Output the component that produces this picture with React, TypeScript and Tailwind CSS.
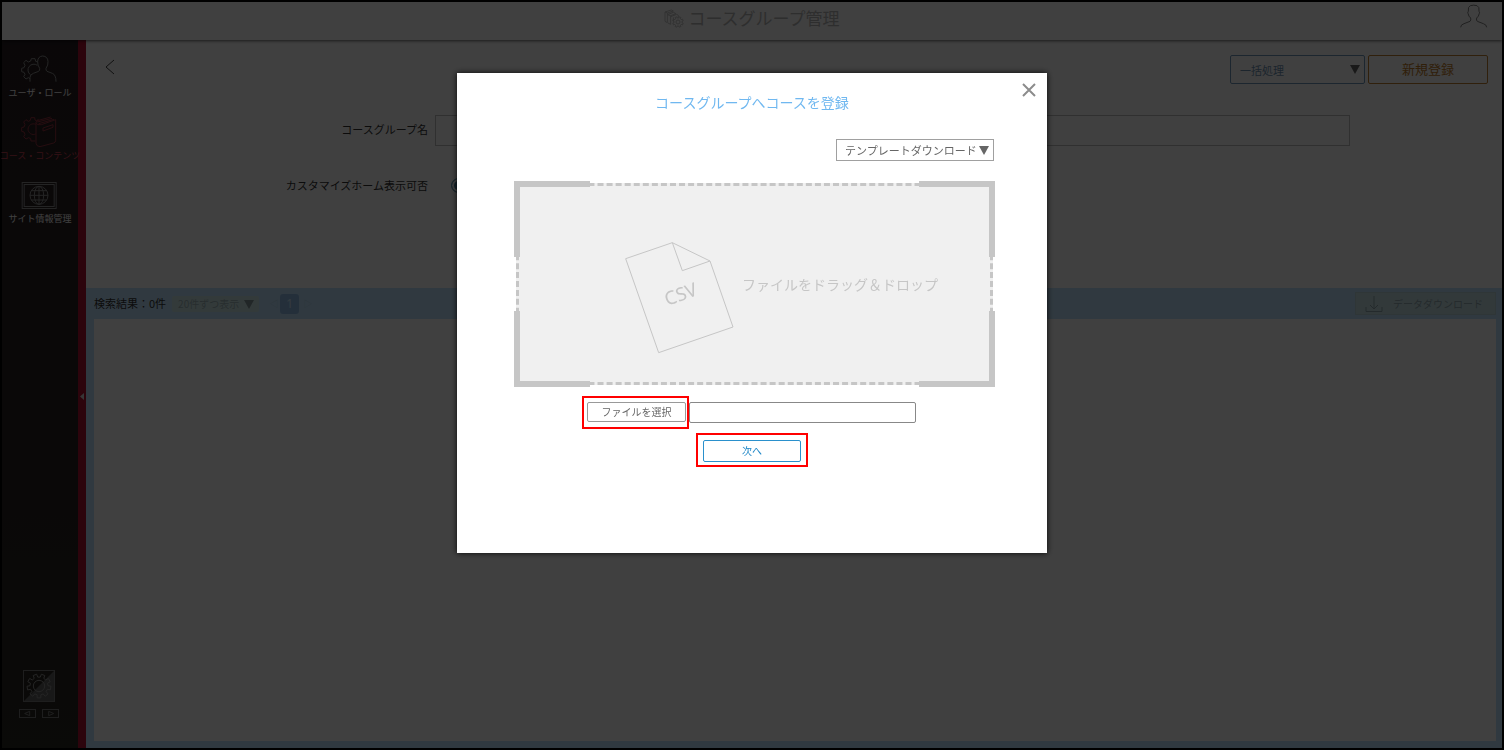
import React from "react";

function gearPath(cx: number, cy: number, outer: number, inner: number, teeth: number) {
  const step = (Math.PI * 2) / teeth;
  const at = (r: number, a: number) =>
    `${(cx + r * Math.cos(a)).toFixed(1)} ${(cy + r * Math.sin(a)).toFixed(1)}`;
  let d = "";
  for (let i = 0; i < teeth; i++) {
    const a = i * step - Math.PI / 2 + step / 2;
    d += `${i === 0 ? "M" : "L"}${at(inner, a - step * 0.3)} L${at(outer, a - step * 0.22)} L${at(outer, a + step * 0.22)} L${at(inner, a + step * 0.3)} `;
  }
  return d + "Z";
}

function UserRoleIcon() {
  return (
    <svg className="h-9 w-10" viewBox="62 153 120 108" fill="none" stroke="currentColor" strokeWidth="3">
      <path d="M116 186 L109 184 L107 176 L96 176 L94 183 L87 186 L80 181 L73 188 L77 196 L74 203 L67 205 L67 215 L74 217 L77 223 L73 230 L80 237 L87 233 L92 236" />
      <path d="M114 196 A17 17 0 1 0 93 224" />
      <path d="M92 245 V232 Q92 224 102 220 L118 214 Q122 211 121 205 Q114 196 115 184 Q116 169 130 168 Q145 169 146 184 Q147 196 140 205 Q139 211 143 214 L159 220 Q170 224 170 245" />
    </svg>
  );
}

function CourseIcon() {
  return (
    <svg className="h-9 w-10" viewBox="62 342 120 108" fill="none" stroke="currentColor" strokeWidth="3">
      <path d="M118 358 L111 362 L107 360 L106 353 L95 353 L93 361 L87 364 L80 359 L73 366 L77 374 L74 381 L67 383 L67 394 L74 396 L77 403 L73 410 L80 417 L88 413 L94 416 L95 423 L108 423" />
      <path d="M109 373 A16 16 0 1 0 109 402" />
      <path d="M110 368 Q110 363 118 361 L154 351 M114 366 L158 355 M118 371 L164 358" />
      <path d="M110 368 V430 Q112 440 122 440 L163 429 Q169 427 169 421 V359 L126 374 Q112 377 110 368" />
      <path d="M131 384 L161 374 V382 L131 393 Z" />
    </svg>
  );
}

function SiteIcon() {
  return (
    <svg className="h-9 w-10" viewBox="61 531 120 108" fill="none" stroke="currentColor" strokeWidth="3">
      <rect x="67.5" y="547.5" width="102" height="78" />
      <rect x="73.5" y="553.5" width="90" height="66" />
      <circle cx="118" cy="586" r="27" />
      <ellipse cx="118" cy="586" rx="14" ry="27" />
      <path d="M118 559 V613 M91 586 H145 M95 572 H141 M95 600 H141" />
    </svg>
  );
}

function SideItem({ label, icon, active }: { label: string; icon: React.ReactNode; active?: boolean }) {
  return (
    <a href="#" className={`flex flex-col items-center ${active ? "text-[#983440]" : "text-[#909090]"}`}>
      {icon}
      <span className={`text-[9px] leading-3 whitespace-nowrap ${active ? "text-[#d04458]" : "text-white"}`}>
        {label}
      </span>
    </a>
  );
}

function Sidebar() {
  return (
    <aside className="flex shrink-0">
      <nav className="relative flex w-19 flex-col gap-[15px] bg-[linear-gradient(#281f22,#282222_60%,#2a2820)] pt-[11px] pb-[30px]">
        <SideItem label="ユーザ・ロール" icon={<UserRoleIcon />} />
        <SideItem label="コース・コンテンツ" icon={<CourseIcon />} active />
        <SideItem label="サイト情報管理" icon={<SiteIcon />} />
        <div className="mt-auto flex flex-col items-center gap-[7px] pr-[2px] text-[#787878]">
          <button type="button" aria-label="設定">
            <svg className="block size-8" viewBox="0 0 96 96" fill="none" stroke="currentColor" strokeWidth="3">
              <path d="M96 0 V96 H0 Z" fill="#606060" stroke="none" />
              <rect x="1.5" y="1.5" width="93" height="93" />
              <path d={gearPath(48, 48, 36, 27, 9)} stroke="#909090" />
              <circle cx="48" cy="48" r="17" stroke="#909090" />
            </svg>
          </button>
          <div className="flex gap-[6px]">
            <button type="button" aria-label="前へ">
              <svg className="block h-[9px] w-[17px]" viewBox="0 0 51 27" fill="none" stroke="currentColor" strokeWidth="3">
                <rect x="1.5" y="1.5" width="48" height="24" />
                <path d="M32 7 V20 L17 13.5 Z" />
              </svg>
            </button>
            <button type="button" aria-label="次へ">
              <svg className="block h-[9px] w-[17px]" viewBox="0 0 51 27" fill="none" stroke="currentColor" strokeWidth="3">
                <rect x="1.5" y="1.5" width="48" height="24" />
                <path d="M20 7 V20 L35 13.5 Z" />
              </svg>
            </button>
          </div>
        </div>
      </nav>
      <button type="button" aria-label="メニューを閉じる" className="flex w-2 items-center justify-center bg-[#b01030] pt-1">
        <svg className="h-[7px] w-1" viewBox="0 0 4 7" fill="#d8d8d8">
          <path d="M4 0 V7 L0 3.5 Z" />
        </svg>
      </button>
    </aside>
  );
}

function Header() {
  return (
    <header className="relative z-10 grid h-[38px] shrink-0 grid-cols-[1fr_auto_1fr] items-start bg-white px-[14px] shadow-[0_1px_3px_rgba(0,0,0,0.6)]">
      <h1 className="col-start-2 flex items-center gap-1 pt-1 text-[17px] leading-6 text-[#b8b8b8]">
        <svg className="size-5" viewBox="0 0 60 60" fill="none" stroke="#c4c4c4" strokeWidth="3">
          <path d="M3 12 L22 6 L28 9 L10 15 Z M3 12 V40 L10 44 V15 M10 20 L28 13 L36 17 L20 23 Z M20 23 V49 L12 45 M20 26 L38 19 L43 22 V28 M28 28 V40" />
          <path d={gearPath(42, 42, 16, 12, 8)} />
          <circle cx="42" cy="42" r="6" />
        </svg>
        コースグループ管理
      </h1>
      <button type="button" aria-label="アカウント" className="justify-self-end pt-[2px]">
        <svg className="block h-6 w-7" viewBox="0 0 84 72" fill="none" stroke="#808080" strokeWidth="3">
          <path d="M2 70 Q2 62 12 59 L30 52 Q34 49 32 42 Q26 38 24 28 Q22 24 25 22 Q23 8 31 5 Q41 2 51 5 Q59 8 57 22 Q60 24 58 28 Q56 38 50 42 Q48 49 52 52 L70 59 Q80 62 80 70" />
        </svg>
      </button>
    </header>
  );
}

function Triangle({ className }: { className: string }) {
  return (
    <svg className={className} viewBox="0 0 10 9">
      <path d="M0 0 H10 L5 9 Z" fill="currentColor" />
    </svg>
  );
}

function Content() {
  return (
    <main className="flex min-w-0 flex-1 flex-col bg-white text-[11px] text-[#333]">
      <section className="h-[248px] shrink-0">
        <div className="flex items-start justify-between pt-[15px] pr-[14px] pl-[18px]">
          <button type="button" aria-label="戻る" className="pt-1">
            <svg className="block h-4 w-3" viewBox="0 0 12 16" fill="none" stroke="#444" strokeWidth="1">
              <path d="M10 1 L2 8 L10 15" />
            </svg>
          </button>
          <div className="flex gap-[3px]">
            <div className="relative">
              <select
                aria-label="一括処理"
                className="h-[29px] w-[135px] appearance-none rounded-[2px] border border-[#7098bc] bg-white pt-[2px] pl-[9px] text-[11px] text-[#7094b4]"
              >
                <option>一括処理</option>
              </select>
              <Triangle className="pointer-events-none absolute top-[10px] right-[5px] h-[9px] w-[10px] text-[#666]" />
            </div>
            <button
              type="button"
              className="h-[29px] w-30 rounded-[2px] border border-[#c08030] pb-[2px] text-[13px] leading-6 text-[#c07c28]"
            >
              新規登録
            </button>
          </div>
        </div>
        <div className="flex items-center pt-[31px]">
          <label htmlFor="group-name" className="w-[342px] pb-[2px] text-right">
            コースグループ名
          </label>
          <input
            id="group-name"
            type="text"
            className="mr-[152px] ml-[7px] h-[31px] min-w-0 flex-1 border border-[#c0c0c0] bg-white px-2"
          />
        </div>
        <div className="flex items-center pt-[31px]">
          <label htmlFor="home-visible" className="w-[342px] text-right">
            カスタマイズホーム表示可否
          </label>
          <input
            id="home-visible"
            name="home"
            type="radio"
            defaultChecked
            className="ml-[23px] size-[15px] appearance-none rounded-full border border-[#6098b0] bg-[#5088a8] shadow-[inset_0_0_0_2px_white]"
          />
        </div>
      </section>
      <section className="flex flex-1 flex-col bg-[#c0e4ff] pr-[6px] pb-[7px] pl-2">
        <div className="flex h-[31px] shrink-0 items-center">
          <p>検索結果：0件</p>
          <div className="relative ml-[6px]">
            <select
              aria-label="表示件数"
              className="block h-4 w-[87px] appearance-none rounded-[2px] bg-[#cce8e8] pl-[6px] text-[10px] leading-4 text-[#9cb4b8]"
            >
              <option>20件ずつ表示</option>
            </select>
            <Triangle className="pointer-events-none absolute top-1 right-[5px] h-[9px] w-[10px] text-[#84989c]" />
          </div>
          <button type="button" className="ml-[9px] w-3 text-[9px] text-[#acd0e8]">◁</button>
          <button type="button" className="h-5 w-[19px] rounded-[3px] bg-[#90bce8] font-['Noto_Sans'] text-[12px] text-[#d0ecff]">
            1
          </button>
          <button type="button" className="ml-[3px] w-3 text-[9px] text-[#acd0e8]">▷</button>
          <button
            type="button"
            className="ml-auto flex h-[23px] w-[141px] items-center gap-[10px] border border-[#bcd8dc] bg-[#c8e4e8] pl-[9px] text-[10px] whitespace-nowrap text-[#90a8b0]"
          >
            <svg className="h-4 w-[18px]" viewBox="0 0 18 16" fill="none" stroke="currentColor" strokeWidth="1">
              <path d="M1 11 V15.5 H17 V11 M9 0 V13 M5 9 L9 13 L13 9" />
            </svg>
            データダウンロード
          </button>
        </div>
        <div className="flex-1 bg-white" />
      </section>
    </main>
  );
}

function DropZone() {
  return (
    <div className="relative flex h-[206px] w-[481px] items-center p-[2px]">
      <div className="flex h-full flex-1 items-center border-3 border-dashed border-[#c6c6c6] bg-[#f0f0f0] pl-[105px]">
        <svg className="mt-7 h-[114px] w-[112px] shrink-0" viewBox="370 213 336 342" fill="none" stroke="#c6c6c6" strokeWidth="3">
          <path d="M375 266 L515 218 L628 273 L697 471 L474 548 Z" />
          <path d="M515 218 L545 302 L628 273" />
          <text
            x="540"
            y="392"
            textAnchor="middle"
            transform="rotate(-20 540 372)"
            fill="#c6c6c6"
            stroke="none"
            fontSize="56"
            fontFamily="Noto Sans, sans-serif"
          >
            CSV
          </text>
        </svg>
        <p className="ml-[6px] text-[14px] whitespace-nowrap text-[#c6c6c6]">ファイルをドラッグ＆ドロップ</p>
      </div>
      <span className="absolute top-0 left-0 size-[76px] border-t-[6px] border-l-[6px] border-[#c6c6c6]" />
      <span className="absolute top-0 right-0 size-[76px] border-t-[6px] border-r-[6px] border-[#c6c6c6]" />
      <span className="absolute bottom-0 left-0 size-[76px] border-b-[6px] border-l-[6px] border-[#c6c6c6]" />
      <span className="absolute right-0 bottom-0 size-[76px] border-r-[6px] border-b-[6px] border-[#c6c6c6]" />
    </div>
  );
}

function Dialog() {
  return (
    <div className="fixed inset-0 z-20 flex items-start justify-center bg-black/75 pt-[73px]">
      <div
        role="dialog"
        aria-modal="true"
        aria-labelledby="dialog-title"
        className="relative w-[590px] bg-white pb-[86px] shadow-[0_0_6px_rgba(0,0,0,0.9)]"
      >
        <button type="button" aria-label="閉じる" className="absolute top-[10px] right-[11px]">
          <svg className="block size-3.5" viewBox="0 0 14 14" fill="none" stroke="#8c8c8c" strokeWidth="2">
            <path d="M1 1 L13 13 M13 1 L1 13" />
          </svg>
        </button>
        <h2 id="dialog-title" className="pt-[19px] text-center text-[14px] leading-5 text-[#70b8f0]">
          コースグループへコースを登録
        </h2>
        <div className="mt-[27px] flex justify-end pr-[53px]">
          <button
            type="button"
            className="flex h-[22px] w-[158px] items-center gap-[2px] border border-[#a0a0a0] pl-2 text-[11px] whitespace-nowrap text-[#666]"
          >
            テンプレートダウンロード
            <Triangle className="h-[9px] w-[10px] text-[#666]" />
          </button>
        </div>
        <div className="mt-5 pl-[57px]">
          <DropZone />
        </div>
        <div className="mt-[9px] flex items-center pl-[125px]">
          <div className="border-2 border-[#f00] pt-1 pr-px pb-[5px] pl-[3px]">
            <button
              type="button"
              className="block h-5 w-[99px] rounded-[2px] border border-[#999] text-[10px] leading-4 text-[#666]"
            >
              ファイルを選択
            </button>
          </div>
          <input
            type="text"
            readOnly
            aria-label="選択したファイル"
            className="h-[21px] w-[227px] rounded-[2px] border border-[#888] px-1 text-[11px]"
          />
        </div>
        <div className="mt-1 flex justify-center">
          <div className="border-2 border-[#f00] px-[5px] pt-[5px] pb-[3px]">
            <button
              type="button"
              className="block h-[22px] w-[98px] rounded-[2px] border border-[#2a90cc] pb-[2px] text-[10px] text-[#2088c8]"
            >
              次へ
            </button>
          </div>
        </div>
      </div>
    </div>
  );
}

export default function App() {
  return (
    <div className="flex min-h-screen flex-col border-2 border-black bg-white font-['Noto_Sans_CJK_JP',sans-serif]">
      <Header />
      <div className="flex flex-1">
        <Sidebar />
        <Content />
      </div>
      <Dialog />
    </div>
  );
}
